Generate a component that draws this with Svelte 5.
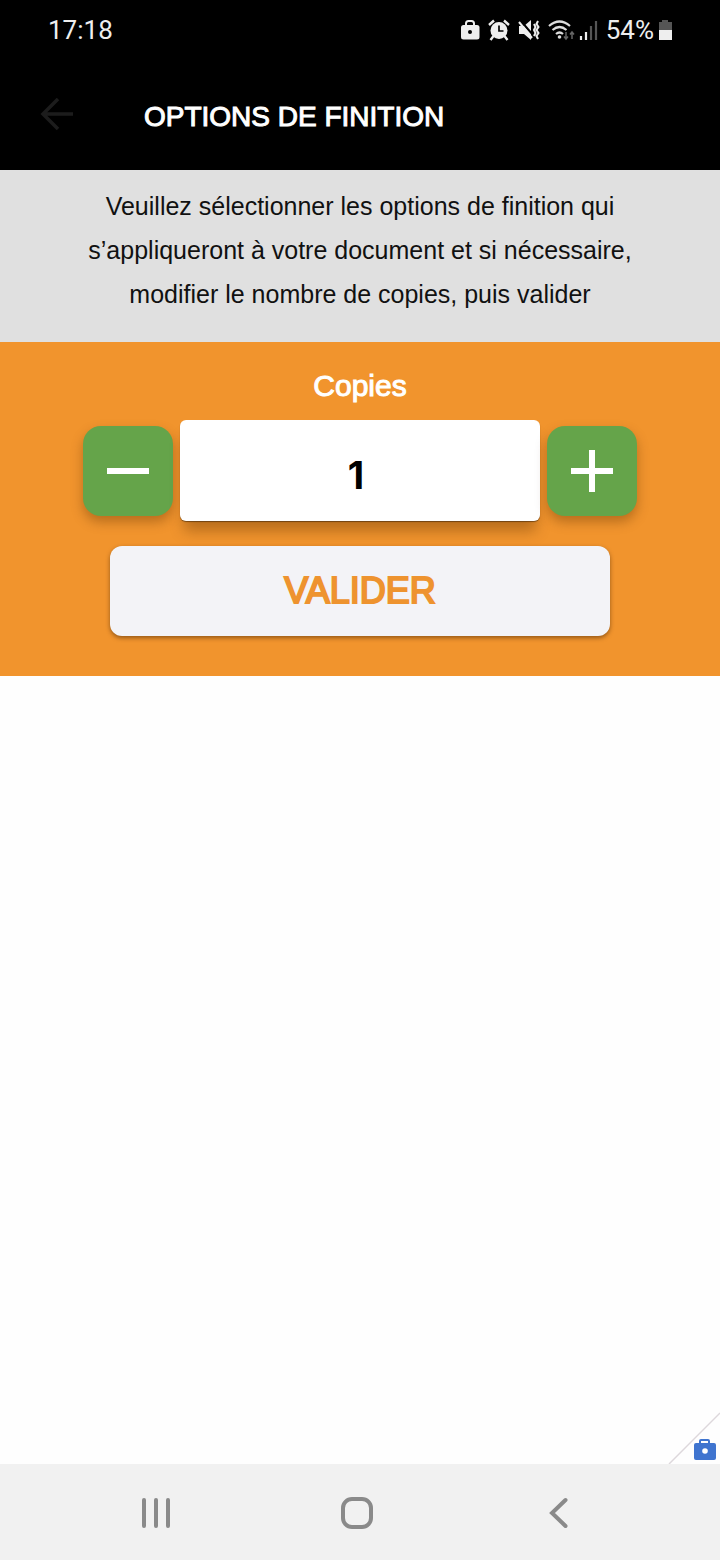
<script>
  let copies = $state(1);

  function step(diff) {
    copies = Math.max(1, Number(copies) + diff);
  }
</script>

<div class="screen">
  <header>
    <div class="status">
      <span class="time">17:18</span>
      <div class="indicators">
        <svg width="20" height="22" viewBox="0 0 20 22">
          <path d="M6 7V4.500Q6 2 8.500 2h3Q14 2 14 4.500V7" fill="none" stroke="#eee" stroke-width="2" />
          <rect x="1" y="6" width="18.500" height="14.500" rx="2.500" fill="#eee" />
          <circle cx="10" cy="13" r="2" fill="#000" />
        </svg>
        <svg width="22" height="22" viewBox="0 0 22 22">
          <circle cx="11" cy="11.500" r="8.500" fill="#eee" />
          <path d="M1 6 6 1.500M21 6l-5-4.500M5.500 17 2.500 21M16.500 17l3 4" stroke="#eee" stroke-width="2.400" />
          <path d="M11 6.500V12h4.500" fill="none" stroke="#000" stroke-width="1.700" />
        </svg>
        <svg width="22" height="22" viewBox="0 0 22 22">
          <path d="M1 7h5l7-6v20l-7-6H1z" fill="#eee" />
          <path d="m2 1 13 15" stroke="#000" stroke-width="2" />
          <path d="m1 3 13 16" stroke="#eee" stroke-width="2" />
          <path d="m16 5 1.500 3-1.500 3 1.500 3-1.500 3M20 2l-1.500 3L20.500 8l-2 3 2 3-2 3 1.500 3" fill="none" stroke="#eee" stroke-width="2" />
        </svg>
        <svg width="27" height="22" viewBox="0 0 27 22">
          <path d="M1 7q10.500-9 21 0M4.500 11q7-6 14 0M8 15q3.500-3 7 0" fill="none" stroke="#ddd" stroke-width="2.200" />
          <circle cx="11.500" cy="18" r="1.800" fill="#ddd" />
          <path d="M18 13v7m-2-2.500 2 2.500 2-2.500M24 20v-7m-2 2.500 2-2.500 2 2.500" fill="none" stroke="#666" stroke-width="1.500" />
        </svg>
        <svg width="19" height="22" viewBox="0 0 19 22">
          <path d="M2 17v4M7 13v8" stroke="#eee" stroke-width="2.200" />
          <path d="M12 7v14M17 2v19" stroke="#555" stroke-width="2.200" />
        </svg>
        <span class="level">54%</span>
        <svg width="14" height="22" viewBox="0 0 14 22">
          <path d="M4 1h6v2h4v8H1V3h3z" fill="#555" />
          <path d="M1 11h13v10H1z" fill="#eee" />
        </svg>
      </div>
    </div>
    <div class="titlebar">
      <button class="back" aria-label="Retour">
        <svg width="34" height="34" viewBox="0 0 34 34">
          <path d="M33 16H3M18 1 3 16l15 15" fill="none" stroke="#1c1c1c" stroke-width="3.500" />
        </svg>
      </button>
      <h1>OPTIONS DE FINITION</h1>
    </div>
  </header>

  <p class="intro">
    Veuillez sélectionner les options de finition qui s’appliqueront à votre
    document et si nécessaire, modifier le nombre de copies, puis valider
  </p>

  <main>
    <label for="copies">Copies</label>
    <div class="stepper">
      <button class="step" aria-label="Moins" onclick={() => step(-1)}>
        <svg width="42" height="42" viewBox="0 0 42 42">
          <path d="M0 21h42" stroke="#fff" stroke-width="6" />
        </svg>
      </button>
      <input id="copies" type="text" inputmode="numeric" bind:value={copies} />
      <button class="step" aria-label="Plus" onclick={() => step(1)}>
        <svg width="42" height="42" viewBox="0 0 42 42">
          <path d="M0 21h42M21 0v42" stroke="#fff" stroke-width="6" />
        </svg>
      </button>
    </div>
    <button class="submit">VALIDER</button>
  </main>

  <div class="rest">
    <svg class="corner" width="52" height="52" viewBox="0 0 52 52">
      <path d="M1 52 52 1" stroke="#ddd8dc" stroke-width="1.500" />
      <path d="M32 32v-3q0-1 1-1h7q1 0 1 1v3" fill="none" stroke="#3f74cf" stroke-width="2" />
      <rect x="26" y="31" width="22" height="17" rx="2" fill="#3f74cf" />
      <circle cx="37" cy="39" r="2.800" fill="#fff" />
    </svg>
  </div>

  <nav>
    <button aria-label="Applications récentes">
      <svg width="32" height="32" viewBox="0 0 32 32">
        <path d="M4 3v26M16 3v26M28 3v26" />
      </svg>
    </button>
    <button aria-label="Accueil">
      <svg width="32" height="32" viewBox="0 0 32 32">
        <rect x="2" y="2" width="28" height="28" rx="9" />
      </svg>
    </button>
    <button aria-label="Précédent">
      <svg width="32" height="32" viewBox="0 0 32 32">
        <path d="M23.500 3 10 16l13.500 13" />
      </svg>
    </button>
  </nav>
</div>

<style>
  :global(body) {
    margin: 0;
  }

  .screen {
    display: flex;
    flex-direction: column;
    min-height: 100vh;
    background: #fefefe;
    font-family: "Liberation Sans", Arial, sans-serif;
  }

  button {
    display: flex;
    align-items: center;
    justify-content: center;
    padding: 0;
    border: 0;
    background: none;
    font-family: inherit;
    cursor: pointer;
  }

  svg {
    display: block;
    flex: none;
  }

  header {
    background: #000;
    color: #fff;
  }

  .status {
    display: flex;
    align-items: center;
    justify-content: space-between;
    height: 60px;
    padding: 0 48px;
    font-family: Roboto, sans-serif;
    font-size: 26px;
    color: #eee;
  }

  .indicators {
    display: flex;
    align-items: center;
    gap: 8px;
  }

  .indicators svg:nth-of-type(4) {
    margin-right: -4px;
  }

  .level {
    margin-right: -4px;
  }

  .titlebar {
    display: flex;
    align-items: center;
    gap: 70px;
    height: 110px;
    padding: 0 40px;
  }

  h1 {
    margin: 0;
    padding-top: 4px;
    font-size: 28px;
    font-weight: 400;
    -webkit-text-stroke: 1px currentColor;
  }

  .intro {
    margin: 0;
    padding: 14px 80px 26px;
    background: #e0e0e0;
    color: #111;
    font-size: 25px;
    line-height: 44px;
    text-align: center;
  }

  main {
    display: flex;
    flex-direction: column;
    align-items: center;
    padding: 22px 40px 40px;
    background: #f1942d;
  }

  label {
    margin-bottom: 12px;
    color: #fff;
    font-size: 30px;
    line-height: 44px;
    -webkit-text-stroke: 1px currentColor;
  }

  .stepper {
    display: flex;
    align-items: center;
    justify-content: center;
    gap: 7px;
    width: 100%;
    margin-bottom: 25px;
  }

  .step {
    flex: none;
    width: 90px;
    height: 90px;
    border-radius: 18px;
    background: #65a44a;
    box-shadow: 0 6px 12px rgba(80, 40, 0, 0.35);
  }

  input {
    box-sizing: border-box;
    width: 360px;
    min-width: 0;
    height: 101px;
    padding: 8px 8px 0 0;
    border: 0;
    border-radius: 6px;
    background: #fff;
    box-shadow:
      0 1px 1px rgba(0, 0, 0, 0.4),
      0 14px 14px -4px rgba(80, 40, 0, 0.35);
    color: #000;
    font-family: Inter, sans-serif;
    font-size: 38px;
    font-weight: 700;
    text-align: center;
  }

  .submit {
    width: 100%;
    max-width: 500px;
    height: 90px;
    border-radius: 12px;
    background: #f3f3f7;
    box-shadow: 0 2px 4px rgba(60, 30, 0, 0.5);
    color: #ee932f;
    font-size: 36px;
    -webkit-text-stroke: 2px currentColor;
  }

  .rest {
    display: flex;
    flex: 1;
    align-items: flex-end;
    justify-content: flex-end;
  }

  nav {
    box-sizing: border-box;
    display: grid;
    grid-template-columns: repeat(3, 1fr);
    height: 96px;
    padding: 2px 61px 0 55px;
    background: #f1f1f1;
  }

  nav svg {
    fill: none;
    stroke: #8a8a8a;
    stroke-width: 4;
    stroke-linecap: round;
  }
</style>
